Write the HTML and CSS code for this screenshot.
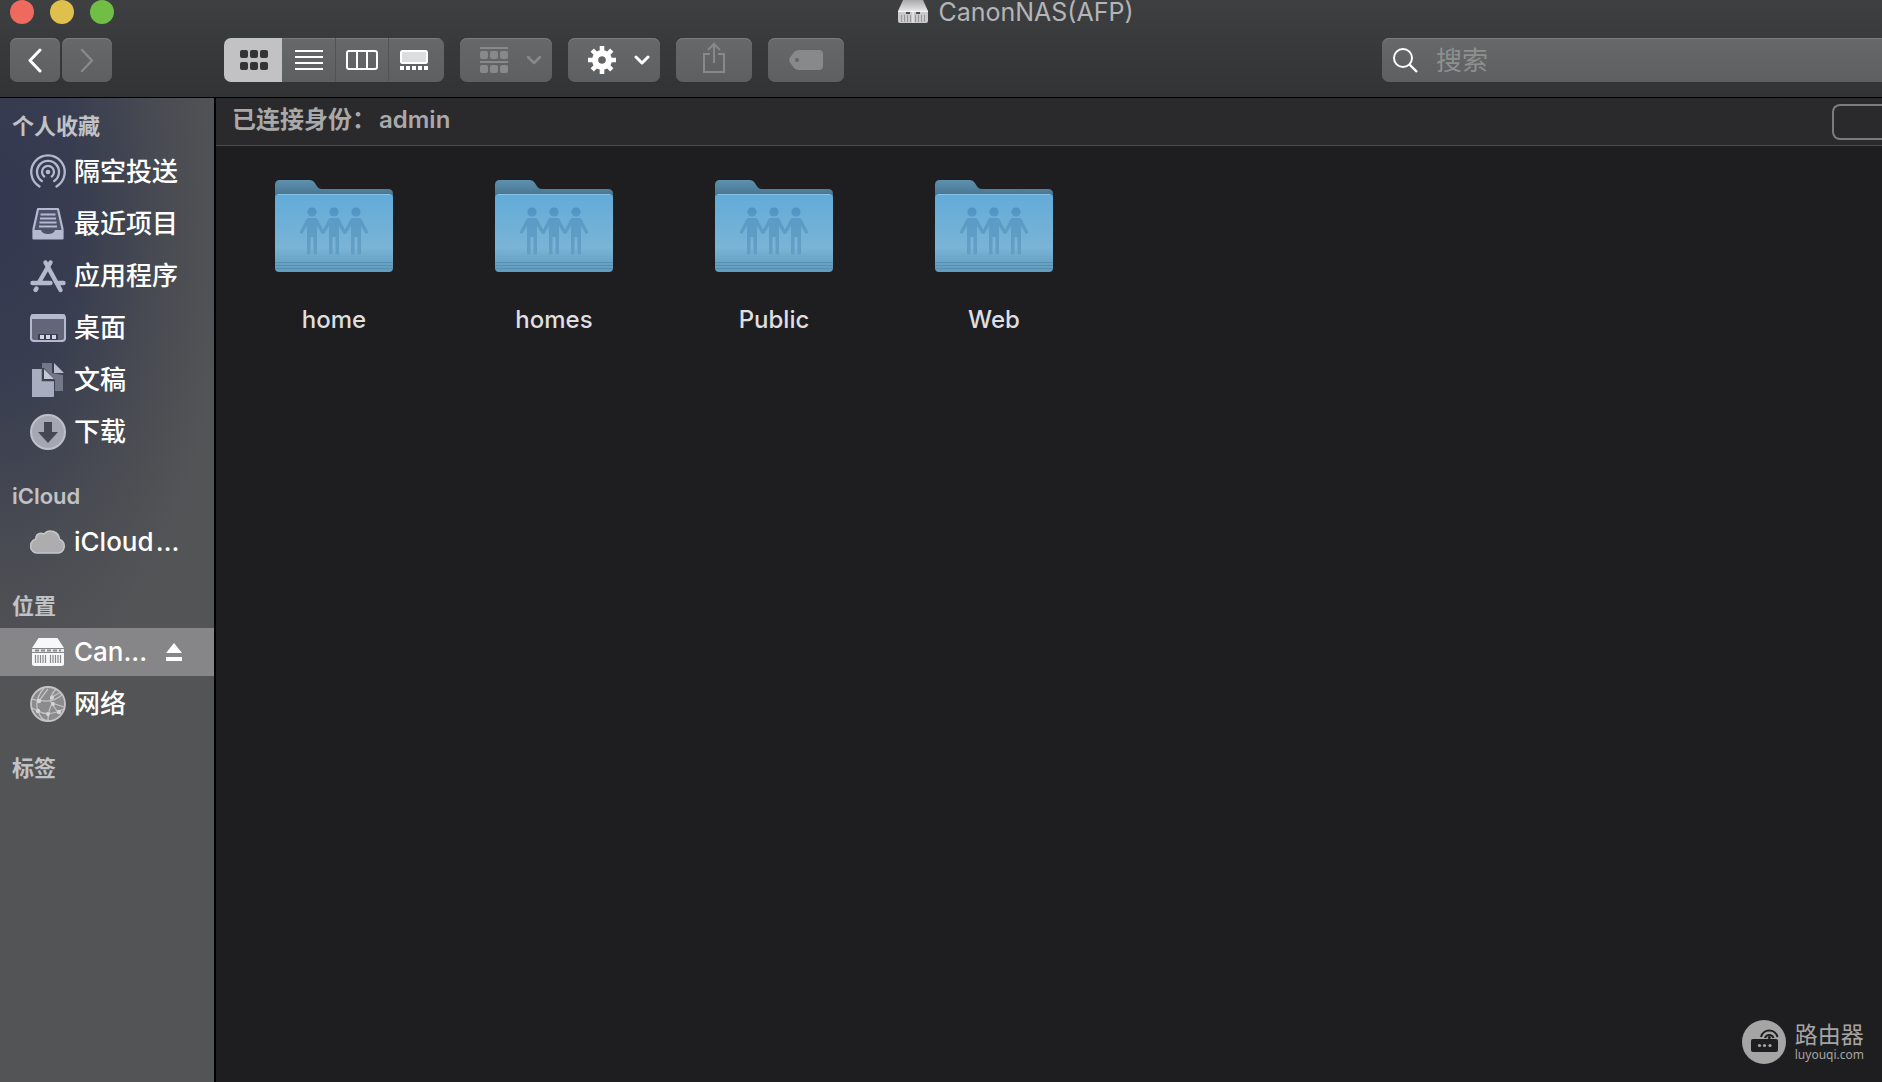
FILE: index.html
```html
<!DOCTYPE html>
<html lang="zh-CN">
<head>
<meta charset="utf-8">
<title>CanonNAS(AFP)</title>
<link rel="stylesheet" href="styles.css">
</head>
<body>
<svg class="defs" width="0" height="0" aria-hidden="true">
  <defs>
    <linearGradient id="folder-back" x1="0" y1="0" x2="0" y2="1">
      <stop offset="0" stop-color="#5e92b0"/><stop offset="1" stop-color="#3f6780"/>
    </linearGradient>
    <linearGradient id="folder-front" x1="0" y1="0" x2="0" y2="1">
      <stop offset="0" stop-color="#62abd9"/><stop offset="0.68" stop-color="#7ab4d6"/><stop offset="0.86" stop-color="#6aa5c8"/><stop offset="1" stop-color="#619bbd"/>
    </linearGradient>
    <linearGradient id="server-top" x1="0" y1="0" x2="0" y2="1">
      <stop offset="0" stop-color="#a9a9ab"/><stop offset="1" stop-color="#e6e6e8"/>
    </linearGradient>
    <linearGradient id="person-fill" gradientUnits="userSpaceOnUse" x1="0" y1="0" x2="0" y2="48">
      <stop offset="0" stop-color="#4f92c2"/><stop offset="0.25" stop-color="#5b9bc5"/><stop offset="1" stop-color="#649fc3"/>
    </linearGradient>
    <symbol id="person" viewBox="0 0 26 48">
      <g fill="url(#person-fill)">
        <circle cx="13" cy="5" r="4.600"/>
        <path d="M9 11h8l1.500 1 7 13.500-2.600 1.500-4.900-8V47.500h-3.500V30h-3v17.500H8V19l-4.900 8L.5 25.500 7.500 12z"/>
      </g>
    </symbol>
    <symbol id="folder" viewBox="0 0 118 92">
      <path fill="url(#folder-back)" d="M0 20V5q0-5 5-5h30q3 0 4.500 2.500l3 4.500q1.500 2 4 2H113q5 0 5 5v8z"/>
      <rect y="14" width="118" height="78" rx="4" fill="url(#folder-front)"/>
      <path d="M3 14.500h112" stroke="#85c3e8"/>
      <path d="M0 82.500h118M0 85.500h118M0 88.500h118" stroke="#4f88aa" stroke-opacity=".7"/>
      <use href="#person" x="24" y="27" width="26" height="48"/>
      <use href="#person" x="46" y="27" width="26" height="48"/>
      <use href="#person" x="68" y="27" width="26" height="48"/>
    </symbol>
  </defs>
</svg>

<div class="window">
  <header class="toolbar">
    <div class="titlebar">
      <div class="lights">
        <button class="light close" aria-label="关闭"></button>
        <button class="light minimize" aria-label="最小化"></button>
        <button class="light zoom" aria-label="缩放"></button>
      </div>
      <h1 class="title">
        <svg width="32" height="24" viewBox="0 0 32 24"><path fill="url(#server-top)" d="M6 0h20l5 11H1z"/><path fill="#c9c9cb" d="M1 11h30v10q0 2-2 2H3q-2 0-2-2z"/><path stroke="#222" stroke-width="1.500" d="M9 13h4M19 13h4"/><path stroke="#f4f4f4" d="M1 11.500h30M16 11v12"/><path stroke="#98989a" d="M4.500 15v7M7.500 15v7M10.500 15v7M13.500 15v7M18.500 15v7M21.500 15v7M24.500 15v7M27.500 15v7"/></svg>
        <span>CanonNAS(AFP)</span>
      </h1>
    </div>
    <div class="controls">
      <div class="history">
        <button class="btn nav" aria-label="后退"><svg width="16" height="26" viewBox="0 0 16 26"><path d="M13 3 3 13.500 13 24" fill="none" stroke="#fff" stroke-width="3" stroke-linecap="round" stroke-linejoin="round"/></svg></button>
        <button class="btn nav" aria-label="前进" disabled><svg width="16" height="26" viewBox="0 0 16 26"><path d="M3 3l10 10.500L3 24" fill="none" stroke="#88898b" stroke-width="2.500" stroke-linecap="round" stroke-linejoin="round"/></svg></button>
      </div>
      <div class="views">
        <button class="view active" aria-label="图标"><svg width="28" height="20" viewBox="0 0 28 20" fill="#333436"><rect width="8" height="8" rx="2"/><rect x="10" width="8" height="8" rx="2"/><rect x="20" width="8" height="8" rx="2"/><rect y="12" width="8" height="8" rx="2"/><rect x="10" y="12" width="8" height="8" rx="2"/><rect x="20" y="12" width="8" height="8" rx="2"/></svg></button>
        <button class="view" aria-label="列表"><svg width="28" height="20" viewBox="0 0 28 20"><path d="M0 1h28M0 7h28M0 13h28M0 19h28" stroke="#fff" stroke-width="2"/></svg></button>
        <button class="view" aria-label="分栏"><svg width="32" height="20" viewBox="0 0 32 20"><rect x="1" y="1" width="30" height="18" rx="2" fill="none" stroke="#fff" stroke-width="2"/><path d="M11 1v18M21 1v18" stroke="#fff" stroke-width="2"/></svg></button>
        <button class="view gallery" aria-label="画廊"><svg width="28" height="20" viewBox="0 0 28 20"><rect x="1" y="1" width="26" height="12" rx="1.500" fill="#dcdddf" stroke="#fff" stroke-width="2"/><path d="M0 18h28" stroke="#fff" stroke-width="4" stroke-dasharray="4 2"/></svg></button>
      </div>
      <button class="btn menu" aria-label="分组" disabled>
        <svg width="28" height="26" viewBox="0 0 28 26" fill="#88898b"><path d="M0 0h28v2H0zM0 14h28v2H0z"/><rect y="4" width="8" height="8" rx="2"/><rect x="10" y="4" width="8" height="8" rx="2"/><rect x="20" y="4" width="8" height="8" rx="2"/><rect y="18" width="8" height="8" rx="2"/><rect x="10" y="18" width="8" height="8" rx="2"/><rect x="20" y="18" width="8" height="8" rx="2"/></svg>
        <svg width="16" height="10" viewBox="0 0 16 10"><path d="M2 2l6 6 6-6" fill="none" stroke="#88898b" stroke-width="2.500" stroke-linecap="round" stroke-linejoin="round"/></svg>
      </button>
      <button class="btn menu" aria-label="操作">
        <svg width="28" height="28" viewBox="-14 -14 28 28"><g stroke="#fff" stroke-width="4.600"><path d="M0-14V-5M0 14V5M-14 0h9M14 0H5M-9.800-9.800l6 6M9.800 9.800l-6-6M9.800-9.800l-6 6M-9.800 9.800l6-6"/></g><circle r="6.800" fill="none" stroke="#fff" stroke-width="6.400"/><circle r="3.600" fill="#636466"/></svg>
        <svg width="16" height="10" viewBox="0 0 16 10"><path d="M2 2l6 6 6-6" fill="none" stroke="#fff" stroke-width="3" stroke-linecap="round" stroke-linejoin="round"/></svg>
      </button>
      <button class="btn wide" aria-label="共享" disabled><svg class="share" width="24" height="32" viewBox="0 0 24 32"><path d="M8 12H2v18h20V12h-6M12 21V2M6 8l6-6 6 6" fill="none" stroke="#88898b" stroke-width="2"/></svg></button>
      <button class="btn wide" aria-label="标签" disabled><svg width="34" height="20" viewBox="0 0 34 20"><path fill="#88898b" fill-rule="evenodd" d="M10 0h20q4 0 4 4v12q0 4-4 4H10Q7 20 5 18L1 12.500q-1.800-2.500 0-5L5 2q2-2 5-2zM8 8a2 2 0 1 0 0 4 2 2 0 0 0 0-4z"/></svg></button>
      <label class="search">
        <svg width="26" height="26" viewBox="0 0 26 26"><circle cx="11" cy="11" r="9" fill="none" stroke="#fff" stroke-width="2"/><path d="M17.500 17.500 25 25" stroke="#fff" stroke-width="2.400"/></svg>
        <input type="search" placeholder="搜索" aria-label="搜索">
      </label>
    </div>
  </header>

  <div class="body">
    <nav class="sidebar">
      <h2>个人收藏</h2>
      <ul>
        <li><a href="#airdrop"><svg width="36" height="36" viewBox="0 0 36 36"><circle cx="18" cy="18" r="2.300" fill="#b4b9cf"/><g fill="none" stroke="#b4b9cf" stroke-width="2.300" stroke-linecap="round"><path d="M14.200 22.500a6 6 0 1 1 7.600 0"/><path d="M11.800 27a11 11 0 1 1 12.400 0"/><path d="M9.500 32.500a16.700 16.700 0 1 1 17 0"/></g></svg><span>隔空投送</span></a></li>
        <li><a href="#recents"><svg width="36" height="36" viewBox="0 0 36 36"><path d="M8 3h20l4.500 20v9.500h-29V23z" fill="#4d526a" stroke="#b4b9cf" stroke-width="2.200" stroke-linejoin="round"/><path d="M3.500 24H11q1 4 7 4t7-4h7.500v8.500h-29z" fill="#b4b9cf"/><path d="M10.500 8.500h15M10 12.500h16M9.500 16.500h17M9 20.500h18" stroke="#b4b9cf" stroke-width="1.800"/></svg><span>最近项目</span></a></li>
        <li><a href="#applications"><svg width="36" height="36" viewBox="0 0 36 36" fill="none" stroke="#b4b9cf" stroke-width="4.400" stroke-linecap="round"><path d="M20.500 4.500 9.500 23.500M15.500 4.500l15 27.500M2.500 25h18M29 25h4.500"/><path d="M6.500 30.500l-1 1.500"/></svg><span>应用程序</span></a></li>
        <li><a href="#desktop"><svg width="36" height="36" viewBox="0 0 36 36"><rect x="1" y="5" width="34" height="26" rx="3" fill="#626678" stroke="#b4b9cf" stroke-width="2"/><path d="M1 4.500h34V9H1z" fill="#b4b9cf"/><rect x="8" y="24" width="20" height="6" fill="#3b3e4d"/><path d="M10 25h4v4h-4zM16 25h4v4h-4zM22 25h4v4h-4z" fill="#d3d6e2"/></svg><span>桌面</span></a></li>
        <li><a href="#documents"><svg width="36" height="36" viewBox="0 0 36 36"><path d="M12 1h10v10l11 2v16h-8V18L14 6h-2z" fill="#737788"/><path d="M24 1v10h10z" fill="#b9bccb"/><path d="M2 7h10v12h12v15q0 1-1 1H2z" fill="#a8adbf"/><path d="M12.500 6v12.500H24" fill="none" stroke="#3f4352" stroke-width="1.500"/><path d="M14 7v10h10z" fill="#c3c6d3"/></svg><span>文稿</span></a></li>
        <li><a href="#downloads"><svg width="36" height="36" viewBox="0 0 36 36"><circle cx="18" cy="18" r="17" fill="#a5a8b2" stroke="#bfc1ca" stroke-width="2"/><path d="M14 8h8v10h6L18 29 8 18h6z" fill="#444854"/></svg><span>下载</span></a></li>
      </ul>
      <h2>iCloud</h2>
      <ul>
        <li><a href="#icloud"><svg width="36" height="36" viewBox="0 0 36 36"><path d="M8 29a7 7 0 0 1-2.500-13.700Q6 9.500 11 9.300q1.500 0 2.800.7A9 9 0 0 1 29.500 15.500 7 7 0 0 1 28.500 29z" fill="#adadaf" stroke="#c6c6c8" stroke-width="1.500"/></svg><span>iCloud&hairsp;…</span></a></li>
      </ul>
      <h2>位置</h2>
      <ul>
        <li class="selected"><a href="#canonnas"><svg width="36" height="36" viewBox="0 0 36 36"><path d="M8.500 4h19L34 14H2z" fill="#f7f8f9"/><path d="M2 15h32v3H2z" fill="#e9eaeb"/><path d="M5 16.500h26" stroke="#8a8a8c" stroke-width="2" stroke-dasharray="4 2"/><path d="M2 19h32v11q0 2-2 2H4q-2 0-2-2z" fill="#f7f8f9"/><path d="M5.500 21v8M8 21v8M10.500 21v8M13 21v8M15.500 21v8M20.500 21v8M23 21v8M25.500 21v8M28 21v8M30.500 21v8" stroke="#8a8a8c" stroke-width="1.200"/></svg><span>Can...</span></a><button class="eject" aria-label="推出"><svg width="16" height="18" viewBox="0 0 16 18" fill="#fff"><path d="M8 0l8 10H0zM0 14h16v4H0z"/></svg></button></li>
        <li><a href="#network"><svg width="36" height="36" viewBox="0 0 36 36"><circle cx="18" cy="18" r="17" fill="#8b8b8d" stroke="#c4c4c6" stroke-width="1.800"/><g fill="none" stroke="#c4c4c6" stroke-width="1.300"><path d="M14 2Q4 14 8 25t10 9M9 14Q22 18 33 8M26 3Q18 12 22 18t7 9M8 25q10 6 26-2M18 34q0-10 5-18M2 13l7 2 9-12M2 22l6 3M22 11l9-5M22 17l12 4"/></g><g fill="#d4d4d6"><circle cx="9" cy="15" r="2.200"/><circle cx="22" cy="11.500" r="2"/><circle cx="23" cy="18" r="2"/><circle cx="8" cy="25" r="2.200"/><circle cx="18" cy="28" r="2"/><circle cx="29" cy="26" r="2.200"/></g></svg><span>网络</span></a></li>
      </ul>
      <h2>标签</h2>
    </nav>

    <main class="content">
      <div class="status">
        <p>已连接身份：<span>admin</span></p>
        <button class="disconnect" aria-label="断开连接"></button>
      </div>
      <ul class="files">
        <li><svg width="118" height="92"><use href="#folder"/></svg><span>home</span></li>
        <li><svg width="118" height="92"><use href="#folder"/></svg><span>homes</span></li>
        <li><svg width="118" height="92"><use href="#folder"/></svg><span>Public</span></li>
        <li><svg width="118" height="92"><use href="#folder"/></svg><span>Web</span></li>
      </ul>
    </main>
  </div>
</div>

<div class="watermark">
  <svg width="44" height="44" viewBox="0 0 44 44"><circle cx="22" cy="22" r="22" fill="#a5a5a5"/><rect x="9" y="19" width="27" height="13" rx="2" fill="#1e1e20"/><g fill="#a5a5a5"><circle cx="17.500" cy="25.500" r="1.600"/><circle cx="22.500" cy="25.500" r="1.600"/><circle cx="28" cy="25.500" r="1.600"/></g><g fill="none" stroke="#1e1e20" stroke-width="2"><path d="M19 17a8.500 8.500 0 0 1 16.500 0"/><path d="M23 18a4.500 4.500 0 0 1 8.500 0"/></g><circle cx="27.300" cy="17.500" r="1.500" fill="#1e1e20"/></svg>
  <div class="brand"><strong>路由器</strong><small>luyouqi.com</small></div>
</div>
</body>
</html>
```

FILE: styles.css
```css
* {
  box-sizing: border-box;
}

html,
body {
  height: 100%;
  margin: 0;
}

body {
  overflow: hidden;
  background: #1e1e20;
  color: #dfdfe0;
  font-family: Inter, "Noto Sans CJK SC", sans-serif;
  font-size: 24px;
}

h1,
h2,
p,
ul {
  margin: 0;
  padding: 0;
  font: inherit;
  list-style: none;
}

button {
  padding: 0;
  border: 0;
  background: none;
  font: inherit;
}

svg {
  display: block;
  flex: none;
}

.defs {
  position: absolute;
}

.window {
  display: flex;
  flex-direction: column;
  min-height: 100%;
}

/* Toolbar */

.toolbar {
  padding-bottom: 15px;
  border-bottom: 1px solid #000;
  background: linear-gradient(#3e3f41, #323335);
}

.titlebar {
  display: grid;
  grid-template-columns: 149px 1fr;
  align-items: center;
  height: 20px;
}

.lights {
  display: flex;
  gap: 16px;
  padding-left: 10px;
}

.light {
  width: 24px;
  height: 24px;
  border-radius: 50%;
}

.close {
  background: #ee6a5f;
}

.minimize {
  background: #e0c04c;
}

.zoom {
  background: #71be46;
}

.title {
  display: flex;
  justify-content: center;
  align-items: center;
  gap: 9px;
  color: #b4b5b6;
  font-size: 25px;
  line-height: 20px;
}

.controls {
  display: flex;
  gap: 16px;
  padding: 18px 0 0 10px;
}

.history {
  display: flex;
  gap: 2px;
  margin-right: 96px;
}

.btn,
.view,
.search {
  display: flex;
  align-items: center;
  justify-content: center;
  height: 44px;
  background: linear-gradient(#67686a, #5e5f61);
  box-shadow: inset 0 1px #7a7b7d;
}

.btn {
  border-radius: 7px;
}

.nav {
  width: 50px;
}

.views {
  display: flex;
  border-radius: 7px;
  overflow: hidden;
}

.view {
  width: 53px;
}

.view + .view + .view {
  border-left: 1px solid #525355;
}

.active {
  width: 58px;
  padding-left: 2px;
  background: #c2c2c4;
  box-shadow: none;
}

.gallery {
  width: 56px;
  padding-right: 6px;
}

.menu {
  width: 92px;
  gap: 18px;
  padding-left: 10px;
}

.wide {
  width: 76px;
}

.share {
  margin-bottom: 4px;
}

.search {
  flex: 1;
  justify-content: flex-start;
  gap: 18px;
  margin-left: 522px;
  padding-left: 10px;
  border-radius: 7px 0 0 7px;
}

.search input {
  flex: 1;
  min-width: 0;
  padding: 0;
  border: 0;
  outline: 0;
  background: none;
  color: #fff;
  font: inherit;
  font-size: 26px;
}

.search input::placeholder {
  color: #8e9090;
}

/* Sidebar */

.body {
  display: flex;
  flex: 1;
}

.sidebar {
  flex: none;
  width: 216px;
  padding-top: 15px;
  border-right: 2px solid #000;
  background: radial-gradient(230px 480px at 0 110px, #333850, #383d50 35%, #484b52 70%, #535456);
}

.sidebar h2 {
  padding-left: 12px;
  color: #c1c2c5;
  font-size: 22px;
  font-weight: 600;
  line-height: 26px;
}

.sidebar ul {
  display: grid;
  gap: 4px;
  padding: 9px 0 27px;
}

.sidebar li {
  display: flex;
  align-items: center;
  height: 48px;
}

.sidebar a {
  display: flex;
  flex: 1;
  align-items: center;
  gap: 8px;
  padding-left: 30px;
  color: #fff;
  font-size: 26px;
  font-weight: 500;
  line-height: 36px;
  text-decoration: none;
  white-space: nowrap;
}

.selected {
  background: #868688;
}

.eject {
  margin-right: 32px;
}

/* Content */

.content {
  flex: 1;
  min-width: 0;
}

.status {
  display: flex;
  align-items: center;
  justify-content: space-between;
  height: 48px;
  padding-left: 16px;
  border-bottom: 1px solid #48494b;
  background: #2a2a2c;
}

.status p {
  display: flex;
  gap: 3px;
  padding-bottom: 4px;
  color: #a9a9aa;
  font-weight: 600;
  line-height: 30px;
}

.disconnect {
  width: 50px;
  height: 36px;
  border: 2px solid #7b7b7d;
  border-right: 0;
  border-radius: 8px 0 0 8px;
}

.files {
  display: flex;
  flex-wrap: wrap;
  padding: 34px 8px;
}

.files li {
  display: flex;
  flex-direction: column;
  align-items: center;
  gap: 32px;
  width: 220px;
  font-weight: 500;
  line-height: 32px;
}

/* Watermark */

.watermark {
  position: absolute;
  right: 18px;
  bottom: 18px;
  display: flex;
  align-items: center;
  gap: 9px;
  color: #a5a5a5;
}

.brand {
  display: grid;
}

.brand strong {
  font-size: 23px;
  font-weight: 400;
  line-height: 26px;
}

.brand small {
  font-family: "Noto Sans", sans-serif;
  font-size: 12px;
  line-height: 14px;
}
```
